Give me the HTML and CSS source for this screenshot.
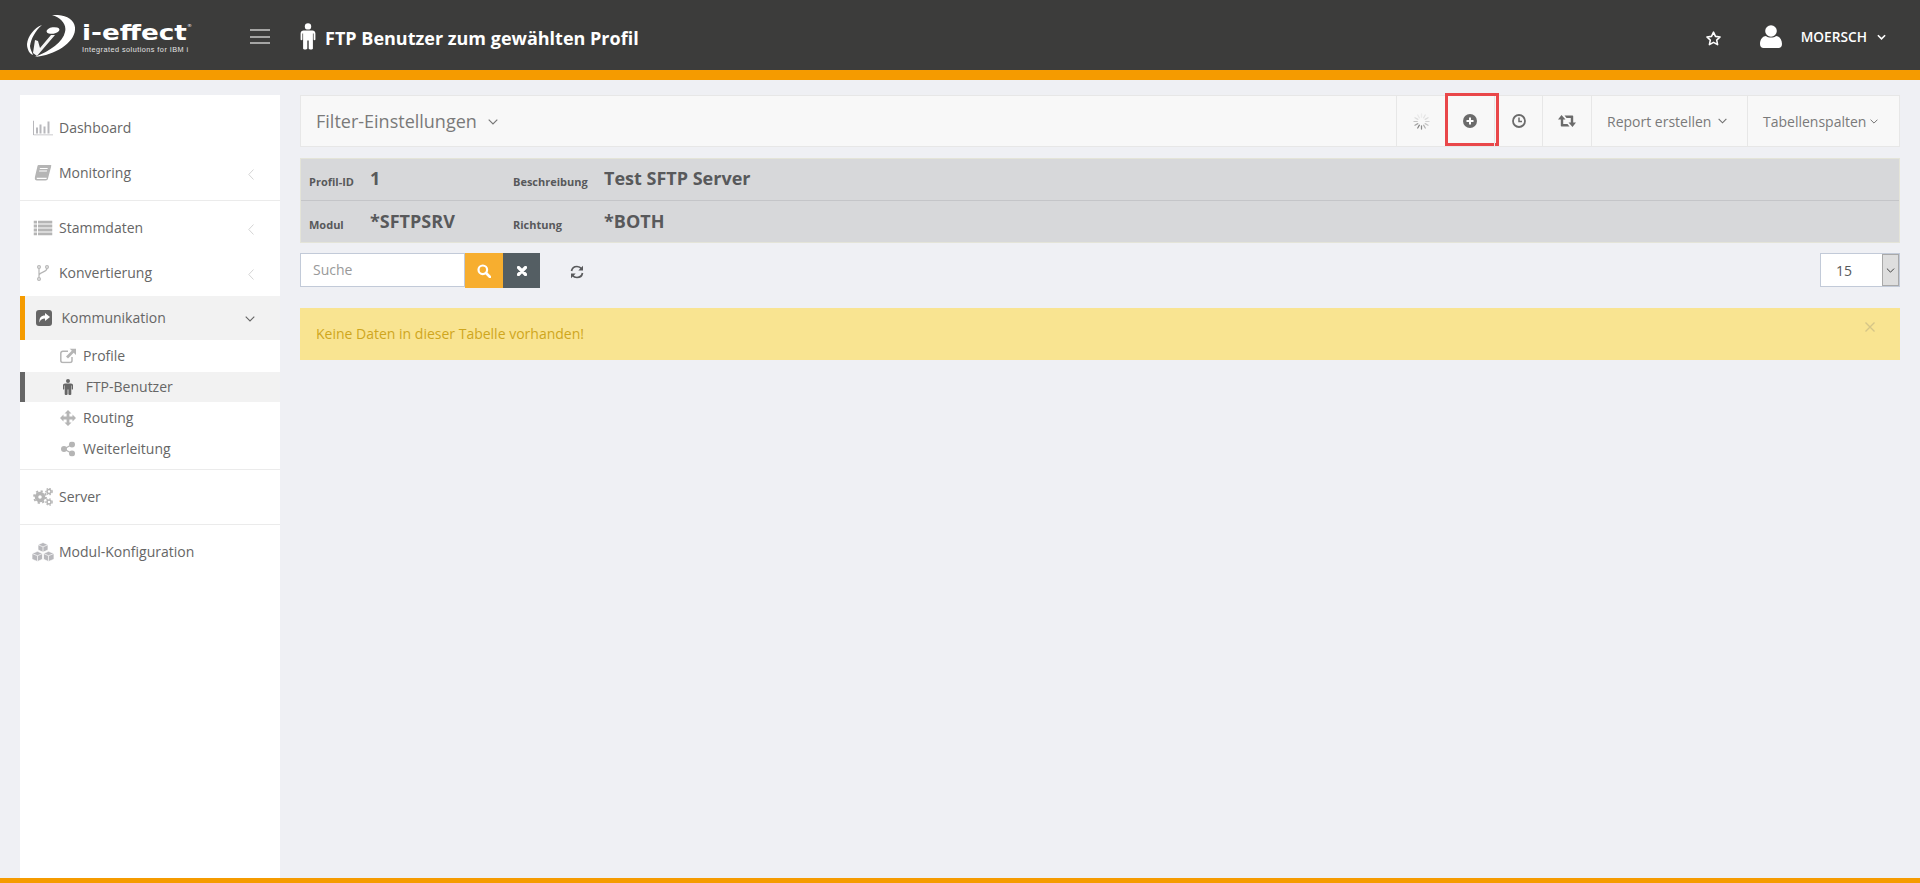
FILE: index.html
```html
<!DOCTYPE html>
<html lang="de">
<head>
<meta charset="utf-8">
<title>FTP Benutzer zum gewählten Profil</title>
<link rel="stylesheet" href="styles.css">
</head>
<body>
<div class="page">
  <header class="topbar">
    <a class="logo">
      <svg class="logo-mark" viewBox="27 15 48 42"><g fill="#fff">
        <path d="M52 15C66 14 76 20 75 30C74 43 55 55 35 57C50 51 63 42 65 32C67 24 61 18 52 15Z"/>
        <path d="M42 25C34 28 28 36 27 44C27 50 30 54 33 55C32 52 30 49 30 46C31 39 35 31 42 25Z"/>
        <path d="M35 40L38 41L40 48L51 35L55 35L37 56L33 53Z" opacity=".95"/>
        <ellipse cx="53" cy="30.5" rx="6.5" ry="3.2" transform="rotate(-8 53 30.5)"/>
      </g></svg>
      <span class="logo-text"><span class="logo-name">i-effect<span class="logo-r">®</span></span><span class="logo-sub">Integrated solutions for IBM i</span></span>
    </a>
    <button class="burger"><span></span><span></span><span></span></button>
    <h1 class="page-title">
      <svg class="title-icon" viewBox="0 0 16 27"><circle cx="8" cy="3.4" r="3.2" fill="#fff"/><path fill="#fff" d="M3.6 7.5H12.4C14 7.5 15.4 8.8 15.4 10.4V16.4C15.4 17.4 13.6 17.4 13.6 16.4V10.6H12.9V25.4C12.9 26.9 9 26.9 8.7 25.4V17.4H7.3V25.4C7 26.9 3.1 26.9 3.1 25.4V10.6H2.4V16.4C2.4 17.4 .6 17.4 .6 16.4V10.4C.6 8.8 2 7.5 3.6 7.5Z"/></svg>
      <span>FTP Benutzer zum gewählten Profil</span>
    </h1>
    <div class="top-right">
      <svg class="star" viewBox="0 0 24 24"><path fill="none" stroke="#fff" stroke-width="2.2" stroke-linejoin="round" d="M12 3L14.8 9L21.3 9.8L16.5 14.2L17.8 20.7L12 17.5L6.2 20.7L7.5 14.2L2.7 9.8L9.2 9Z"/></svg>
      <svg class="user-icon" viewBox="0 0 22 23"><circle cx="11" cy="6" r="5.8" fill="#fff"/><path fill="#fff" d="M0 19C0 14 3 11 6 11C8 13 14 13 16 11C19 11 22 14 22 19C22 21.500 20.500 23 18.500 23H3.500C1.500 23 0 21.500 0 19Z"/></svg>
      <span class="user-name">MOERSCH</span>
      <svg class="caret caret-user" viewBox="0 0 10 6"><path d="M1 1L5 5L9 1" fill="none" stroke="#fff" stroke-width="1.800"/></svg>
    </div>
  </header>
  <div class="accent"></div>

  <div class="workspace">
    <nav class="sidebar">
      <ul class="nav-group nav-first">
        <li class="nav-item">
          <svg class="ico" viewBox="0 0 20 15" style="width:20px;height:15px"><path fill="none" stroke="#b8b8bc" d="M.5 0V14.500H20"/><path fill="#b8b8bc" d="M3 7H5V13H3ZM6.500 4H8.500V13H6.500ZM10.500 6H12.500V13H10.500ZM14.500 1H16.500V13H14.500Z"/></svg>
          <span>Dashboard</span>
        </li>
        <li class="nav-item">
          <svg class="ico" viewBox="0 0 17 16" style="width:17px;height:16px"><path fill="#b5b5b5" d="M4 0H16.500C17 0 17 .5 16.800 1L13.500 13.500C13.300 14.500 12.500 15.500 11 15.500H2.500C1 15.500 0 14.500 .2 13L3 1C3.100 .4 3.500 0 4 0ZM5.500 3L5.200 4H13L13.300 3ZM4.800 5.500L4.500 6.500H12.300L12.600 5.500Z"/><path fill="#fff" d="M2.200 12.800H12.200L12 14H2.300Z"/></svg>
          <span>Monitoring</span>
          <svg class="chev-left" viewBox="0 0 6 11"><path d="M5.500 .5L.8 5.500L5.500 10.500" fill="none" stroke="#d4d4d4"/></svg>
        </li>
      </ul>
      <ul class="nav-group nav-comm">
        <li class="nav-item">
          <svg class="ico" viewBox="0 0 19 15" style="width:19px;height:15px"><path fill="#b5b5b5" d="M0 0H3.500V3H0ZM4.500 0H19V3H4.500ZM0 4H3.500V7H0ZM4.500 4H19V7H4.500ZM0 8H3.500V11H0ZM4.500 8H19V11H4.500ZM0 12H3.500V15H0ZM4.500 12H19V15H4.500Z"/></svg>
          <span>Stammdaten</span>
          <svg class="chev-left" viewBox="0 0 6 11"><path d="M5.500 .5L.8 5.500L5.500 10.500" fill="none" stroke="#d4d4d4"/></svg>
        </li>
        <li class="nav-item nav-before-open">
          <svg class="ico" viewBox="0 0 12 16" style="width:12px;height:16px"><g fill="none" stroke="#b5b5b5" stroke-width="1.200"><circle cx="2" cy="2" r="1.400"/><circle cx="2" cy="14" r="1.400"/><circle cx="10" cy="2" r="1.400"/><path d="M2 3.500V12.500M10 3.500C10 7 3 7 2 10"/></g></svg>
          <span>Konvertierung</span>
          <svg class="chev-left" viewBox="0 0 6 11"><path d="M5.500 .5L.8 5.500L5.500 10.500" fill="none" stroke="#d4d4d4"/></svg>
        </li>
        <li class="nav-item is-open">
          <svg class="ico" viewBox="0 0 16 16" style="width:16px;height:16px"><rect width="16" height="16" rx="3" fill="#666"/><path fill="#fff" d="M9 3L14 7L9 11V8.500C6 8.500 4.500 9.500 3.500 12.500C3 8 5 5.500 9 5.500Z"/></svg>
          <span>Kommunikation</span>
          <svg class="chev-down" viewBox="0 0 10 6"><path d="M.7 .7L5 5L9.300 .7" fill="none" stroke="#666" stroke-width="1.100"/></svg>
        </li>
        <li class="sub-item sub-first">
          <svg class="ico-sub" viewBox="0 0 16 15" style="width:16px;height:15px"><path fill="none" stroke="#b5b5b5" stroke-width="1.500" d="M12 8.500V12C12 13.200 11.200 14 10 14H2.800C1.600 14 .8 13.200 .8 12V4.800C.8 3.600 1.600 2.800 2.800 2.800H8"/><path fill="#b5b5b5" d="M9.500 0H16V6.500L13.700 4.200L8 10L6 8L11.800 2.300Z"/></svg>
          <span>Profile</span>
        </li>
        <li class="sub-item is-active">
          <svg class="ico-sub" viewBox="0 0 10 16" style="width:10px;height:16px"><circle cx="5" cy="2" r="2" fill="#666"/><path fill="#666" d="M2 4.500H8C9 4.500 10 5.300 10 6.300V10C10 10.700 8.800 10.700 8.800 10V6.500H8.300V15.200C8.300 16.200 5.500 16.200 5.400 15.200V10.500H4.600V15.200C4.500 16.200 1.700 16.200 1.700 15.200V6.500H1.200V10C1.200 10.700 0 10.700 0 10V6.300C0 5.300 1 4.500 2 4.500Z"/></svg>
          <span>FTP-Benutzer</span>
        </li>
        <li class="sub-item">
          <svg class="ico-sub" viewBox="0 0 16 16" style="width:16px;height:16px"><path fill="#b5b5b5" d="M8 0L11.500 3.500H9.400V6.600H12.500V4.500L16 8L12.500 11.500V9.400H9.400V12.500H11.500L8 16L4.500 12.500H6.600V9.400H3.500V11.500L0 8L3.500 4.500V6.600H6.600V3.500H4.500Z"/></svg>
          <span>Routing</span>
        </li>
        <li class="sub-item">
          <svg class="ico-sub" viewBox="0 0 14 15" style="width:14px;height:15px"><g fill="#b5b5b5"><circle cx="3" cy="7.500" r="3"/><circle cx="11" cy="3" r="3"/><circle cx="11" cy="12" r="3"/></g><path d="M3 7.500L11 3M3 7.500L11 12" stroke="#b5b5b5" stroke-width="1.400"/></svg>
          <span>Weiterleitung</span>
        </li>
      </ul>
      <ul class="nav-group nav-short">
        <li class="nav-item">
          <svg class="ico" viewBox="0 0 20 18" style="width:20px;height:18px"><g fill="none" stroke="#b5b5b5"><circle cx="7" cy="9" r="3.500" stroke-width="3.500"/><circle cx="7" cy="9" r="6" stroke-width="1.800" stroke-dasharray="2.200 2.500"/><circle cx="16" cy="3.500" r="2" stroke-width="1.500"/><circle cx="16" cy="3.500" r="3.200" stroke-width="1.200" stroke-dasharray="1.500 1.500"/><circle cx="16" cy="14" r="2" stroke-width="1.500"/><circle cx="16" cy="14" r="3.200" stroke-width="1.200" stroke-dasharray="1.500 1.500"/></g></svg>
          <span>Server</span>
        </li>
      </ul>
      <ul class="nav-group nav-last nav-short">
        <li class="nav-item">
          <svg class="ico ico-wide" viewBox="0 0 23 19" style="width:23px;height:19px"><g fill="#b8b8bc" stroke="#fff" stroke-width=".7"><path d="M11.500 0L16.500 2.200V7.500L11.500 9.700L6.500 7.500V2.200Z"/><path d="M6 8.800L11 11V16.800L6 19L.5 16.800V11Z"/><path d="M17 8.800L22.500 11V16.800L17 19L12 16.800V11Z"/></g><path d="M6.500 2.200L11.500 4.400L16.500 2.200M11.500 4.400V9.700M.5 11L6 13.200L11 11M6 13.200V19M12 11L17 13.200L22.500 11M17 13.200V19" fill="none" stroke="#fff" stroke-width=".7"/></svg>
          <span>Modul-Konfiguration</span>
        </li>
      </ul>
    </nav>

    <main class="content">
      <section class="toolbar">
        <div class="filter-title">Filter-Einstellungen
          <svg class="caret caret-filter" viewBox="0 0 10 6"><path d="M.7 .7L5 5L9.300 .7" fill="none" stroke="#777" stroke-width="1.200"/></svg>
        </div>
        <div class="tool tool-spin">
          <svg class="spinner" viewBox="0 0 18 18"><g stroke-width="1.300" stroke-linecap="round">
            <path d="M9 1V4.500" stroke="#ececec"/><path d="M13 2.100L11.250 5.100" stroke="#e4e4e4"/><path d="M15.900 5L12.900 6.750" stroke="#dcdcdc"/><path d="M17 9H13.500" stroke="#d2d2d2"/><path d="M15.900 13L12.900 11.250" stroke="#c4c4c4"/><path d="M13 15.900L11.250 12.900" stroke="#b0b0b0"/><path d="M9 17V13.500" stroke="#8a8a8a"/><path d="M5 15.900L6.750 12.900" stroke="#808080"/><path d="M2.100 13L5.100 11.250" stroke="#a5a5a5"/><path d="M1 9H4.500" stroke="#c4c4c4"/><path d="M2.100 5L5.100 6.750" stroke="#dcdcdc"/><path d="M5 2.100L6.750 5.100" stroke="#e8e8e8"/>
          </g></svg>
        </div>
        <div class="tool tool-add">
          <svg class="tool-ico" viewBox="0 0 14 14"><circle cx="7" cy="7" r="7" fill="#6b6b6b"/><path d="M3.500 6H6V3.500H8V6H10.500V8H8V10.500H6V8H3.500Z" fill="#fff"/></svg>
          <span class="highlight"></span>
        </div>
        <div class="tool tool-clock">
          <svg class="tool-ico" viewBox="0 0 14 14"><circle cx="7" cy="7" r="6" fill="none" stroke="#6b6b6b" stroke-width="1.800"/><path d="M7 3.500V7.500H10" fill="none" stroke="#6b6b6b" stroke-width="1.500"/></svg>
        </div>
        <div class="tool tool-retweet">
          <svg class="retweet" viewBox="0 0 18 12"><path fill="#6b6b6b" d="M3.500 0L7.500 4.600H5.200V9H9.500L11.500 11.500H3.600C3 11.500 2.800 11.200 2.800 10.700V4.600H0Z"/><path fill="#6b6b6b" d="M14.500 12L10.500 7.400H12.800V3H8.500L6.500 .5H14.400C15 .5 15.200 .8 15.200 1.300V7.400H18Z"/></svg>
        </div>
        <div class="tool tool-report">Report erstellen
          <svg class="caret caret-report" viewBox="0 0 10 6"><path d="M.7 .7L5 5L9.300 .7" fill="none" stroke="#6f6f6f" stroke-width="1.200"/></svg>
        </div>
        <div class="tool tool-columns">Tabellenspalten
          <svg class="caret caret-columns" viewBox="0 0 10 6"><path d="M.7 .7L5 5L9.300 .7" fill="none" stroke="#6f6f6f" stroke-width="1.200"/></svg>
        </div>
      </section>

      <section class="info">
        <div class="info-row">
          <span class="info-label">Profil-ID</span><span class="info-value">1</span>
          <span class="info-label">Beschreibung</span><span class="info-value">Test SFTP Server</span>
        </div>
        <div class="info-row">
          <span class="info-label">Modul</span><span class="info-value">*SFTPSRV</span>
          <span class="info-label">Richtung</span><span class="info-value">*BOTH</span>
        </div>
      </section>

      <section class="search-row">
        <div class="search-input">Suche</div>
        <button class="btn btn-search"><svg class="btn-ico" viewBox="0 0 14 14"><circle cx="5.800" cy="5.800" r="4.300" fill="none" stroke="#fff" stroke-width="2.200"/><path d="M9 9L13 13" stroke="#fff" stroke-width="2.600" stroke-linecap="round"/></svg></button>
        <button class="btn btn-clear"><svg class="btn-ico-x" viewBox="0 0 10 10"><path d="M1.500 1.500L8.500 8.500M8.500 1.500L1.500 8.500" stroke="#fff" stroke-width="3.200" stroke-linecap="round"/></svg></button>
        <svg class="refresh" viewBox="0 0 14 14"><g fill="none" stroke="#58595b" stroke-width="1.700"><path d="M1.500 6C2 3.500 4.200 1.500 7 1.500C9 1.500 10.600 2.500 11.500 3.800"/><path d="M12.500 8C12 10.500 9.800 12.500 7 12.500C5 12.500 3.400 11.500 2.500 10.200"/></g><path fill="#58595b" d="M13 .8V5.500H8.300ZM1 13.200V8.500H5.700Z"/></svg>
        <div class="page-size">
          <span class="page-size-value">15</span>
          <span class="page-size-arrow"><svg viewBox="0 0 10 6"><path d="M.7 .7L5 5L9.300 .7" fill="none" stroke="#333" stroke-width="1.100"/></svg></span>
        </div>
      </section>

      <section class="alert">
        <span>Keine Daten in dieser Tabelle vorhanden!</span>
        <svg class="alert-close" viewBox="0 0 10 10"><path d="M.5 .5L9.500 9.500M9.500 .5L.5 9.500" stroke="#d5c588" stroke-width="1.300"/></svg>
      </section>
    </main>
  </div>
  <div class="bottom-accent"></div>
</div>
</body>
</html>
```

FILE: styles.css
```css
* { box-sizing: border-box; }
html, body { margin: 0; height: 100%; }
body {
  font-family: "Open Sans", "Liberation Sans", sans-serif;
  font-size: 14px;
  color: #58595b;
  background: #eff0f4;
  overflow: hidden;
}
ul { list-style: none; margin: 0; padding: 0; }
button { border: 0; padding: 0; background: none; font: inherit; }
svg { display: block; flex: none; }

.page { display: flex; flex-direction: column; height: 883px; }

/* top bar */
.topbar {
  display: flex;
  align-items: center;
  height: 70px;
  flex: none;
  padding-left: 27px;
  background: #3c3c3b;
  color: #fff;
}
.logo { display: flex; align-items: center; width: 223px; }
.logo-mark { width: 48px; height: 42px; margin-top: 2px; }
.logo-text { display: flex; flex-direction: column; margin-left: 7px; margin-top: 6px; width: 110px; }
.logo-name {
  font-family: "DejaVu Sans", sans-serif;
  font-size: 21px;
  font-weight: 700;
  line-height: 21px;
  white-space: nowrap;
  transform: scaleX(1.25);
  transform-origin: left center;
}
.logo-r { font-size: 4px; font-weight: 400; line-height: 0; vertical-align: 13px; }
.logo-sub {
  font-family: "Liberation Sans", sans-serif;
  font-size: 7.300px;
  letter-spacing: .46px;
  line-height: 9px;
  margin-top: 1px;
  white-space: nowrap;
  color: #e4e4e4;
}
.burger {
  display: flex;
  flex-direction: column;
  justify-content: space-between;
  width: 20px;
  height: 15px;
  margin-top: 3px;
}
.burger span { height: 2px; background: #a5a5a4; }
.page-title {
  display: flex;
  align-items: center;
  margin: 6px 0 0 30px;
  font-size: 18px;
  font-weight: 700;
  line-height: 24px;
  color: #fff;
}
.title-icon { width: 16px; height: 27px; margin-right: 9px; margin-top: -4px; }
.top-right { display: flex; align-items: center; margin-left: auto; padding-right: 34px; }
.star { width: 17px; height: 17px; margin-right: 38px; margin-top: 6px; }
.user-icon { width: 22px; height: 23px; margin-right: 19px; margin-top: 3px; }
.user-name { font-size: 13.700px; font-weight: 600; line-height: 18px; margin-top: 3px; }
.caret-user { width: 9px; height: 6px; margin-left: 10px; margin-top: 3px; }

.accent { height: 10px; flex: none; background: #f59b00; }
.bottom-accent { height: 5px; flex: none; background: #f59b00; }

/* layout */
.workspace {
  flex: 1;
  min-height: 0;
  display: flex;
  gap: 20px;
  padding: 15px 20px 0;
}

/* sidebar */
.sidebar {
  width: 260px;
  flex: none;
  padding-top: 10px;
  background: #fff;
}
.nav-group { padding-bottom: 5px; margin-bottom: 5px; border-bottom: 1px solid #ebebeb; }
.nav-first { margin-bottom: 4px; }
.nav-last { border-bottom: 0; }
.nav-item {
  position: relative;
  display: flex;
  align-items: center;
  height: 45px;
  padding-left: 39px;
  font-size: 14px;
  color: #666;
}
.nav-before-open { margin-bottom: 1px; }
.nav-short .nav-item { height: 44px; padding-bottom: 2px; }
.ico { position: absolute; left: 23px; top: 50%; transform: translate(-50%, -50%); }
.chev-left { position: absolute; left: 228px; top: 19px; width: 6px; height: 11px; }
.chev-down { position: absolute; left: 225px; top: 20px; width: 10px; height: 6px; }
.nav-item.is-open {
  height: 44px;
  padding-left: 36.500px;
  padding-bottom: 2px;
  background: #f2f2f2;
  border-left: 5px solid #f59b00;
}
.nav-item.is-open .ico { left: 19px; }
.nav-item.is-open .chev-down { left: 220px; }
.sub-item {
  position: relative;
  display: flex;
  align-items: center;
  height: 31px;
  padding-left: 63px;
  color: #666;
}
.sub-first { height: 32px; padding-bottom: 2px; }
.ico-sub { position: absolute; left: 47.500px; top: 50%; transform: translate(-50%, -50%); }
.sub-item.is-active {
  height: 30px;
  padding-left: 60.700px;
  padding-bottom: 2px;
  background: #f2f2f2;
  border-left: 5px solid #666;
}
.sub-item.is-active .ico-sub { left: 42.500px; }

/* content */
.content { flex: 1; min-width: 0; display: flex; flex-direction: column; }
.toolbar {
  display: flex;
  align-items: stretch;
  height: 52px;
  background: #f8f8f8;
  border: 1px solid #e7e7e7;
  color: #7a7a7a;
}
.filter-title {
  display: flex;
  align-items: center;
  flex: 1;
  padding-left: 15px;
  font-size: 18px;
}
.caret-filter { width: 10px; height: 6px; margin-left: 11px; margin-top: 1px; }
.tool {
  position: relative;
  display: flex;
  align-items: center;
  justify-content: center;
  border-left: 1px solid #e7e7e7;
  font-size: 14px;
}
.tool-spin { width: 49px; }
.tool-add { width: 49px; }
.tool-clock { width: 48px; }
.tool-retweet { width: 49px; }
.tool-report { width: 156px; justify-content: flex-start; padding-left: 15px; }
.tool-columns { flex: none; width: 152px; justify-content: flex-start; padding-left: 15px; }
.spinner { width: 17px; height: 17px; }
.tool-ico { width: 14px; height: 14px; }
.retweet { width: 18px; height: 12px; }
.caret-report { width: 9px; height: 6px; margin-left: 7px; }
.caret-columns { width: 8px; height: 5px; margin-left: 4px; }
.highlight {
  position: absolute;
  left: -1px;
  top: -3px;
  width: 54px;
  height: 53px;
  border: 3px solid #e9474a;
}

.info {
  margin-top: 11px;
  height: 85px;
  background: #d7d8da;
  border: 1px solid #e4e4d8;
}
.info-row {
  display: grid;
  grid-template-columns: 61px 143px 91px 1fr;
  align-items: start;
  height: 41px;
  padding: 6px 0 0 8px;
  color: #58595b;
}
.info-row + .info-row { height: 42px; padding-top: 7px; border-top: 1px solid #c4c5c8; }
.info-label { margin-top: 9px; font-size: 11px; line-height: 15px; font-weight: 700; }
.info-value { font-size: 18px; font-weight: 700; line-height: 26px; }

.search-row { display: flex; align-items: flex-start; margin-top: 10px; height: 35px; }
.search-input {
  width: 165px;
  height: 34px;
  padding-left: 12px;
  line-height: 31px;
  font-size: 14px;
  color: #999;
  background: #fff;
  border: 1px solid #c2cad8;
}
.btn { display: flex; align-items: center; justify-content: center; height: 35px; }
.btn-search { width: 38px; background: #f7ae2f; }
.btn-clear { width: 37px; background: #545e63; }
.btn-ico { width: 14px; height: 14px; }
.btn-ico-x { width: 10px; height: 10px; }
.refresh { width: 14px; height: 14px; margin: 12px 0 0 30px; }
.page-size {
  display: flex;
  align-items: stretch;
  width: 80px;
  height: 34px;
  margin-left: auto;
  background: #fff;
  border: 1px solid #c2cad8;
}
.page-size-value { flex: 1; padding-left: 15px; line-height: 33px; font-size: 14px; }
.page-size-arrow {
  display: flex;
  align-items: center;
  justify-content: center;
  width: 17px;
  background: #dedede;
  border: 1px solid #a9a9a9;
}
.page-size-arrow svg { width: 9px; height: 5px; }

.alert {
  position: relative;
  display: flex;
  align-items: center;
  justify-content: space-between;
  margin-top: 20px;
  height: 52px;
  padding: 0 25px 2px 16px;
  background: #f9e491;
  color: #cfa61d;
}
.alert-close { width: 10px; height: 10px; margin-bottom: 12px; }
```
